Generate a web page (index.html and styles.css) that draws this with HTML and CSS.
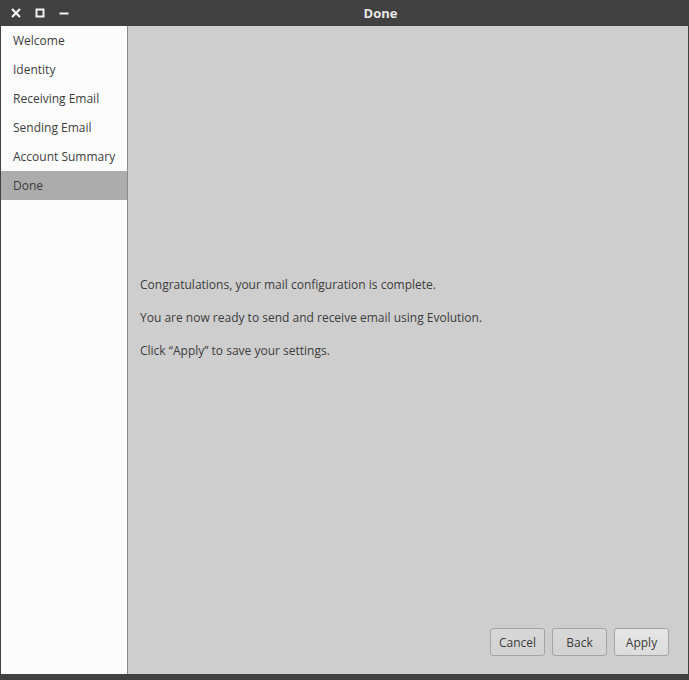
FILE: index.html
```html
<!DOCTYPE html>
<html>
<head>
<meta charset="utf-8">
<link rel="stylesheet" href="styles.css">
</head>
<body>
<div class="window">
  <div class="titlebar">
    <div class="controls">
      <svg class="ctl" width="12" height="12" viewBox="0 0 12 12"><path d="M2 2 L10 10 M10 2 L2 10" stroke="#f2f2f2" stroke-width="2.2" fill="none"/></svg>
      <svg class="ctl" width="12" height="12" viewBox="0 0 12 12"><rect x="2.5" y="2.5" width="7" height="7" stroke="#f2f2f2" stroke-width="2" fill="none"/></svg>
      <svg class="ctl" width="12" height="12" viewBox="0 0 12 12"><path d="M1.5 6.5 H10.5" stroke="#f2f2f2" stroke-width="2" fill="none"/></svg>
    </div>
    <div class="title">Done</div>
  </div>
  <div class="body">
    <ul class="sidebar">
      <li>Welcome</li>
      <li>Identity</li>
      <li>Receiving Email</li>
      <li>Sending Email</li>
      <li>Account Summary</li>
      <li class="active">Done</li>
    </ul>
    <div class="content">
      <div class="messages">
        <p>Congratulations, your mail configuration is complete.</p>
        <p>You are now ready to send and receive email using Evolution.</p>
        <p>Click “Apply” to save your settings.</p>
      </div>
      <div class="buttons">
        <button class="btn">Cancel</button>
        <button class="btn">Back</button>
        <button class="btn default">Apply</button>
      </div>
    </div>
  </div>
</div>
</body>
</html>
```
FILE: styles.css
```css
html, body {
  margin: 0;
  padding: 0;
  background: #414141;
}
body {
  width: 689px;
  height: 680px;
  overflow: hidden;
  font-family: "Open Sans", "Noto Sans", sans-serif;
  font-size: 12px;
  color: #3c3c3c;
}
.window {
  display: flex;
  flex-direction: column;
  width: 689px;
  height: 680px;
  box-sizing: border-box;
  padding: 0 1px 6px 1px;
  background: #414141;
}
.titlebar {
  height: 26px;
  flex: none;
  display: flex;
  align-items: center;
}
.controls {
  display: flex;
  gap: 12px;
  padding-left: 9px;
  width: 63px;
  align-items: center;
}
.ctl {
  display: block;
}
.title {
  flex: 1;
  line-height: 26px;
  text-align: center;
  color: #e8e8e8;
  font-weight: bold;
  font-size: 13px;
}
.body {
  flex: 1;
  display: flex;
  min-height: 0;
}
.sidebar {
  list-style: none;
  margin: 0;
  padding: 0;
  width: 126px;
  flex: none;
  background: #fcfcfc;
  border-right: 1px solid #8a8a8a;
}
.sidebar li {
  height: 29px;
  line-height: 29px;
  padding-left: 12px;
  color: #3c3c3c;
}
.sidebar li.active {
  background: #acacac;
}
.content {
  flex: 1;
  background: #cecece;
  display: flex;
  flex-direction: column;
  justify-content: space-between;
  padding: 0 19px 18px 12px;
}
.messages {
  padding-top: 250px;
}
.messages p {
  margin: 0 0 16px 0;
  line-height: 17px;
}
.buttons {
  display: flex;
  justify-content: flex-end;
  gap: 7px;
}
.btn {
  width: 55px;
  height: 28px;
  box-sizing: border-box;
  border: 1px solid #a4a4a4;
  border-radius: 3px;
  background: linear-gradient(#d8d8d8, #d2d2d2);
  font-family: "Open Sans", "Noto Sans", sans-serif;
  font-size: 12px;
  color: #3c3c3c;
  padding: 0;
}
.btn.default {
  background: linear-gradient(#e6e6e6, #dcdcdc);
}
```
